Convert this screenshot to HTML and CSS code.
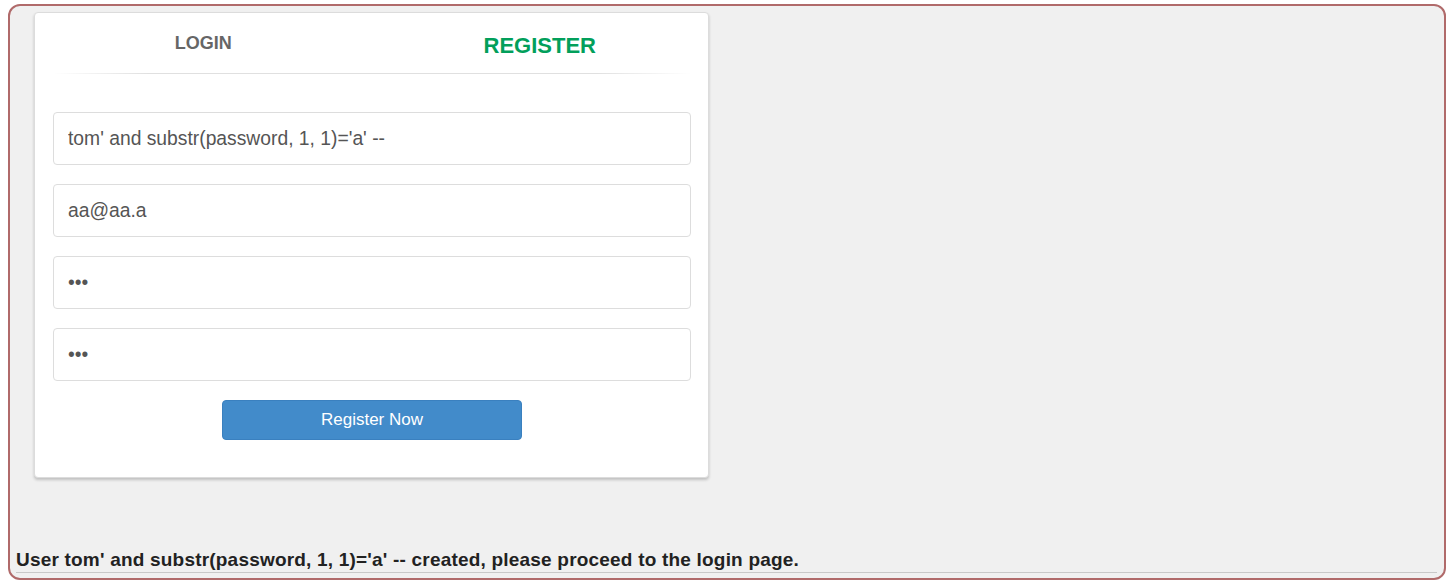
FILE: index.html
```html
<!DOCTYPE html>
<html>
<head>
<meta charset="utf-8">
<link rel="stylesheet" href="styles.css">
</head>
<body>
<div class="frame">
  <div class="card">
    <div class="tabs">
      <div class="tab tab-login">LOGIN</div>
      <div class="tab tab-register">REGISTER</div>
    </div>
    <div class="tab-line"></div>
    <form class="form">
      <input class="field" type="text" value="tom' and substr(password, 1, 1)='a' --">
      <input class="field" type="text" value="aa@aa.a">
      <input class="field" type="password" value="aaa">
      <input class="field" type="password" value="aaa">
      <div class="actions">
        <button class="btn" type="button">Register Now</button>
      </div>
    </form>
  </div>
  <div class="message">User tom' and substr(password, 1, 1)='a' -- created, please proceed to the login page.</div>
  <div class="rule"></div>
</div>
</body>
</html>
```

FILE: styles.css
```css
html, body {
  margin: 0;
  padding: 0;
  background: #ffffff;
  font-family: "Liberation Sans", Arial, sans-serif;
}

.frame {
  margin: 4px 5px 0 8px;
  border: 2px solid #b06a6a;
  border-radius: 12px;
  background: #f0f0f0;
  padding: 0 7px 5px 6px;
  box-sizing: border-box;
}

.card {
  margin: 6px 0 0 18px;
  width: 675px;
  box-sizing: border-box;
  background: #fff;
  border: 1px solid #dcdcdc;
  border-radius: 4px;
  box-shadow: 0 2px 3px rgba(0, 0, 0, 0.2);
  padding: 20px 17px 37px 18px;
}

.tabs {
  display: flex;
  align-items: flex-start;
  margin: 0 -17px 0 -18px;
}

.tab {
  flex: 1;
  text-align: center;
  font-weight: bold;
  line-height: normal;
}

.tab-login {
  font-size: 18px;
  color: #666666;
}

.tab-register {
  font-size: 22px;
  color: #029f5b;
}

.tab-line {
  height: 1px;
  margin-top: 14px;
  background: linear-gradient(to right, rgba(0,0,0,0) 0%, #e0e0e0 15%, #e0e0e0 85%, rgba(0,0,0,0) 100%);
}

.form {
  margin: 38px 0 0 0;
  display: flex;
  flex-direction: column;
  gap: 19px;
}

.field {
  display: block;
  width: 100%;
  height: 53px;
  box-sizing: border-box;
  margin: 0;
  border: 1px solid #dddddd;
  border-radius: 4px;
  padding: 0 14px;
  font-family: "Liberation Sans", Arial, sans-serif;
  font-size: 19.3px;
  color: #555555;
  background: #fff;
  outline: none;
}

.actions {
  display: flex;
  justify-content: center;
}

.btn {
  width: 300px;
  height: 40px;
  box-sizing: border-box;
  margin: 0;
  border: 1px solid #3a80bf;
  border-radius: 4px;
  background: #428bca;
  color: #ffffff;
  font-family: "Liberation Sans", Arial, sans-serif;
  font-size: 17px;
  padding: 0;
}

.message {
  margin-top: 72px;
  font-size: 19px;
  line-height: 19px;
  letter-spacing: 0.2px;
  font-weight: bold;
  color: #222222;
}

.rule {
  margin-top: 3px;
  height: 0;
  border-top: 1px solid #c8c8c8;
}
```
